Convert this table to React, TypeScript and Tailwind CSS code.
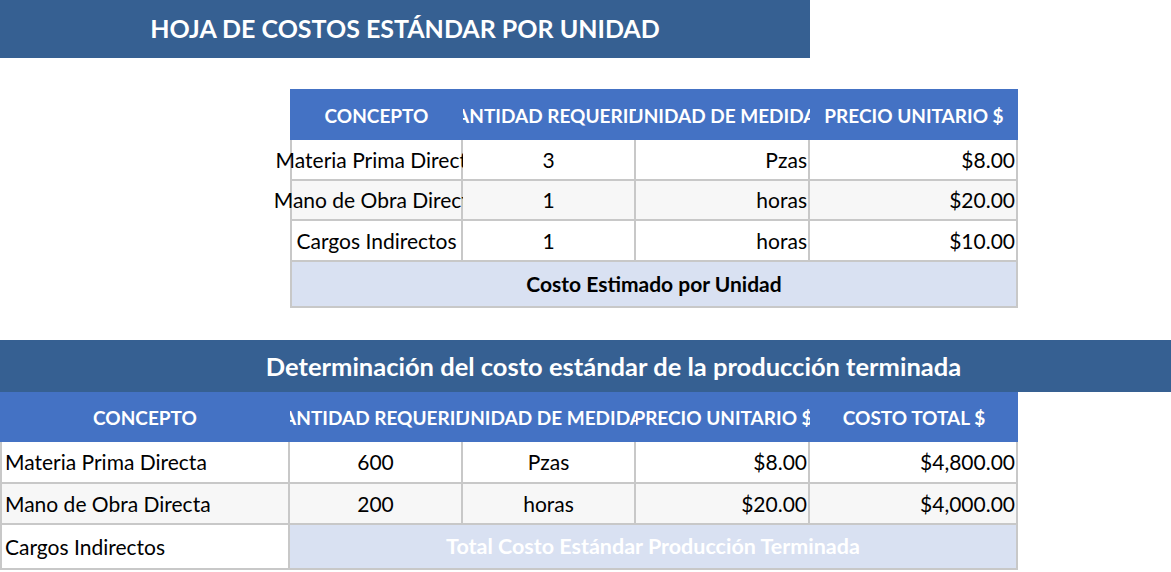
import * as React from 'react'

const line = 'border-[#c8c8c8]'

const unitHeads = ['CONCEPTO', 'CANTIDAD REQUERIDA', 'UNIDAD DE MEDIDA', 'PRECIO UNITARIO $']
const unitRows = [
  { concepto: 'Materia Prima Directa', cantidad: '3', unidad: 'Pzas', precio: '$8.00', bg: 'bg-white', h: 'h-[41px]' },
  { concepto: 'Mano de Obra Directa', cantidad: '1', unidad: 'horas', precio: '$20.00', bg: 'bg-[#f7f7f7]', h: 'h-[40px]' },
  { concepto: 'Cargos Indirectos', cantidad: '1', unidad: 'horas', precio: '$10.00', bg: 'bg-white', h: 'h-[41px]' }
]

const prodHeads = ['CONCEPTO', 'CANTIDAD REQUERIDA', 'UNIDAD DE MEDIDA', 'PRECIO UNITARIO $', 'COSTO TOTAL $']
const prodRows = [
  { concepto: 'Materia Prima Directa', cantidad: '600', unidad: 'Pzas', precio: '$8.00', total: '$4,800.00', bg: 'bg-white', h: 'h-[42px]' },
  { concepto: 'Mano de Obra Directa', cantidad: '200', unidad: 'horas', precio: '$20.00', total: '$4,000.00', bg: 'bg-[#f7f7f7]', h: 'h-[41px]' }
]

function HeadCell({ children }: { children: React.ReactNode }) {
  return (
    <div className="flex items-center justify-center overflow-hidden whitespace-nowrap pt-[3px]">
      {children}
    </div>
  )
}

export default function App() {
  return (
    <div className="w-[1171px] h-[572px] overflow-hidden bg-white text-black font-['Lato','Liberation_Sans',sans-serif]">
      {/* titulo hoja */}
      <div className="w-[810px] h-[58px] bg-[#366092] flex items-center justify-center text-white font-bold text-[25px]">
        HOJA DE COSTOS ESTÁNDAR POR UNIDAD
      </div>

      {/* tabla costo por unidad */}
      <div className="ml-[290px] mt-[31px] w-[728px]">
        <div className="grid grid-cols-[173px_173px_174px_208px] h-[51px] bg-[#4472c4] text-white font-bold text-[19px]">
          {unitHeads.map(h => (
            <HeadCell key={h}>{h}</HeadCell>
          ))}
        </div>
        {unitRows.map(r => (
          <div key={r.concepto} className={`grid grid-cols-[173px_173px_174px_208px] text-[21px] ${r.h} ${r.bg}`}>
            <div className={`flex items-center justify-center whitespace-nowrap border-l-2 border-r-2 border-b-2 ${line} [clip-path:inset(0_0_0_-200px)]`}>
              {r.concepto}
            </div>
            <div className={`flex items-center justify-center border-r-2 border-b-2 ${line}`}>{r.cantidad}</div>
            <div className={`flex items-center justify-end pr-[1px] border-r-2 border-b-2 ${line}`}>{r.unidad}</div>
            <div className={`flex items-center justify-end pr-[1px] border-r-2 border-b-2 ${line}`}>{r.precio}</div>
          </div>
        ))}
        <div className={`h-[46px] flex items-center justify-center bg-[#d9e1f2] border-l-2 border-r-2 border-b-2 ${line} font-bold text-[21px]`}>
          Costo Estimado por Unidad
        </div>
      </div>

      {/* determinacion del costo estandar */}
      <div className="mt-[32px] h-[52px] bg-[#366092] flex items-center justify-center pl-[56px] text-white font-bold text-[25.5px]">
        Determinación del costo estándar de la producción terminada
      </div>
      <div className="w-[1018px]">
        <div className="grid grid-cols-[290px_173px_173px_174px_208px] h-[50px] bg-[#4472c4] text-white font-bold text-[19px]">
          {prodHeads.map(h => (
            <HeadCell key={h}>{h}</HeadCell>
          ))}
        </div>
        {prodRows.map(r => (
          <div key={r.concepto} className={`grid grid-cols-[290px_173px_173px_174px_208px] text-[21px] ${r.h} ${r.bg}`}>
            <div className={`flex items-center pl-[3px] whitespace-nowrap border-l-2 border-r-2 border-b-2 ${line}`}>{r.concepto}</div>
            <div className={`flex items-center justify-center border-r-2 border-b-2 ${line}`}>{r.cantidad}</div>
            <div className={`flex items-center justify-center border-r-2 border-b-2 ${line}`}>{r.unidad}</div>
            <div className={`flex items-center justify-end pr-[1px] border-r-2 border-b-2 ${line}`}>{r.precio}</div>
            <div className={`flex items-center justify-end pr-[1px] border-r-2 border-b-2 ${line}`}>{r.total}</div>
          </div>
        ))}
        <div className="grid grid-cols-[290px_728px] h-[45px] text-[21px]">
          <div className={`flex items-center pl-[3px] bg-white border-l-2 border-r-2 border-b-2 ${line}`}>Cargos Indirectos</div>
          <div className={`flex items-center justify-center bg-[#d9e1f2] text-white font-bold text-[21.5px] border-r-2 border-b-2 ${line}`}>
            Total Costo Estándar Producción Terminada
          </div>
        </div>
      </div>
    </div>
  )
}
